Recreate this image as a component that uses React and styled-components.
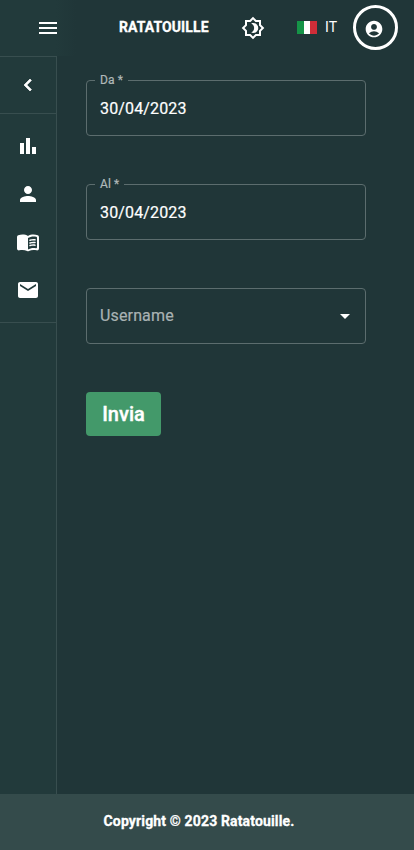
import React from "react";
import styled, { createGlobalStyle } from "styled-components";
import { MdMenu, MdPerson, MdEmail, MdAccountCircle, MdArrowDropDown } from "react-icons/md";

const Global = createGlobalStyle`
  * { box-sizing: border-box; }
  body { margin: 0; background: #203638; }
  button { font: inherit; color: inherit; letter-spacing: inherit; border: 0; padding: 0; background: none; }
`;

const Page = styled.div`
  height: 850px;
  display: grid;
  grid-template-rows: 56px 1fr 56px;
  font-family: Roboto, sans-serif;
  color: #fff;
  background: #203638;
`;

const Header = styled.header`
  display: flex;
  align-items: center;
  background: linear-gradient(90deg, #223a3b 0 56px, #203638 76px);
`;

const IconButton = styled.button`
  display: flex;
  margin-left: ${(p) => p.$left}px;
  font-size: 24px;
`;

const Brand = styled.h1`
  margin: 0 0 2px 59px;
  width: 90px;
  font-size: 14px;
  font-weight: 700;
  line-height: 20px;
  letter-spacing: 0.1px;
  -webkit-text-stroke: 0.3px currentColor;
  white-space: nowrap;
`;

const Language = styled.button`
  display: flex;
  align-items: center;
  margin: 0 0 2px 32px;
  width: 56px;
  gap: 8px;
  font-size: 14px;
  line-height: 20px;
  letter-spacing: 0.15px;
`;

const Flag = styled.span`
  width: 20px;
  height: 13px;
  background: linear-gradient(90deg, #159447 0 33.3%, #fff 33.3% 66.6%, #cf2d38 66.6%);
`;

const Account = styled.button`
  display: flex;
  align-items: center;
  justify-content: center;
  width: 45px;
  height: 45px;
  && { margin-bottom: 1px; padding: 2px 3px 0 0; border: 3px solid #fff; }
  border-radius: 50%;
  font-size: 20px;
`;

const Body = styled.div`
  display: grid;
  grid-template-columns: 57px 1fr;
`;

const Sidebar = styled.nav`
  background: #223a3b;
  border-right: 1px solid #384e4f;
`;

const NavGroup = styled.div`
  display: flex;
  flex-direction: column;
  border-top: ${(p) => (p.$first ? "1px solid #384e4f" : "0")};
  border-bottom: 1px solid #384e4f;
  padding: ${(p) => (p.$first ? "4px 0" : "8px 0")};
`;

const NavItem = styled.button`
  display: flex;
  align-items: center;
  justify-content: center;
  height: 48px;
  font-size: 24px;
`;

const Form = styled.form`
  display: flex;
  flex-direction: column;
  align-items: flex-start;
  padding: 19px 0 0 29px;
`;

const Field = styled.fieldset`
  width: 280px;
  height: 61px;
  margin: 0 0 43px;
  padding: 0 13px;
  border: 1px solid #5c6d6e;
  border-radius: 4px;
`;

const Legend = styled.legend`
  margin-left: -5px;
  padding: 0 5px;
  height: 11px;
  font-size: 12px;
  line-height: 10px;
  letter-spacing: 0.12px;
  color: #b0b9b9;
  -webkit-text-stroke: 0.2px currentColor;
`;

const Value = styled.div`
  padding-top: 11px;
  font-size: 16px;
  line-height: 23px;
  letter-spacing: 0.15px;
  -webkit-text-stroke: 0.2px currentColor;
`;

const Select = styled.button`
  && {
    display: flex;
    align-items: center;
    justify-content: space-between;
    width: 280px;
    height: 56px;
    margin: 5px 0 48px;
    padding: 0 8px 0 13px;
    border: 1px solid #5c6d6e;
  }
  border-radius: 4px;
  font-size: 24px;
`;

const Placeholder = styled.span`
  margin-bottom: 2px;
  font-size: 16px;
  line-height: 23px;
  letter-spacing: 0.15px;
  color: #a9b2b3;
  -webkit-text-stroke: 0.2px currentColor;
`;

const Submit = styled.button`
  && { background: #43996a; font-size: 20px; font-weight: 500; }
  width: 75px;
  height: 44px;
  border-radius: 4px;
  -webkit-text-stroke: 0.4px currentColor;
`;

const Footer = styled.footer`
  display: flex;
  justify-content: center;
  padding: 17px 16px 0 0;
  background: #344b4b;
  font-size: 14px;
  font-weight: 700;
  line-height: 20px;
  letter-spacing: 0.15px;
  -webkit-text-stroke: 0.3px currentColor;
`;

const Icon = ({ children }) => (
  <svg width="24" height="24" viewBox="0 0 24 24" fill="currentColor">{children}</svg>
);

const Collapse = () => (
  <Icon>
    <path d="M15.41 7.41 14 6l-6 6 6 6 1.41-1.41L10.83 12z" stroke="currentColor" strokeWidth="0.7" />
  </Icon>
);

const BarChart = () => (
  <Icon><path d="M4 9h4v11H4zm12 4h4v7h-4zm-6-9h4v16h-4z" /></Icon>
);

const Brightness = () => (
  <Icon>
    <path d="M20 8.69V4h-4.69L12 .69 8.69 4H4v4.69L.69 12 4 15.31V20h4.69L12 23.31 15.31 20H20v-4.69L23.31 12 20 8.69zm-2 5.79V18h-3.52L12 20.48 9.52 18H6v-3.52L3.52 12 6 9.52V6h3.52L12 3.52 14.48 6H18v3.52L20.48 12 18 14.48z" />
    <path d="M12.29 7c-.74 0-1.45.17-2.08.46 1.72.79 2.92 2.53 2.92 4.54s-1.2 3.75-2.92 4.54c.63.29 1.34.46 2.08.46 2.76 0 5-2.24 5-5s-2.24-5-5-5z" />
  </Icon>
);

const BookLine = "c-.32 0-.61-.2-.71-.52-.13-.39.09-.82.48-.94 1.54-.5 3.53-.66 5.36-.45.41.05.71.42.66.83s-.42.71-.83.66c-1.62-.19-3.39-.04-4.73.39-.08.01-.16.03-.23.03z";

const MenuBook = () => (
  <Icon>
    <path d="M17.5 4.5c-1.95 0-4.05.4-5.5 1.5-1.45-1.1-3.55-1.5-5.5-1.5-1.45 0-2.99.22-4.28.79C1.49 5.62 1 6.33 1 7.14v11.28c0 1.3 1.22 2.26 2.48 1.94.98-.25 2.02-.36 3.02-.36 1.56 0 3.22.26 4.56.92.6.3 1.28.3 1.87 0 1.34-.67 3-.92 4.56-.92 1 0 2.04.11 3.02.36 1.26.33 2.48-.63 2.48-1.94V7.14c0-.81-.49-1.52-1.22-1.85-1.28-.57-2.82-.79-4.27-.79zM21 17.23c0 .63-.58 1.09-1.2.98-.75-.14-1.53-.2-2.3-.2-1.7 0-4.15.65-5.5 1.5V8c1.35-.85 3.8-1.5 5.5-1.5.92 0 1.83.09 2.7.28.46.1.8.51.8.98v9.47z" />
    <path d={`M13.98 11.01${BookLine}M13.98 13.67${BookLine}M13.98 16.33${BookLine}`} />
  </Icon>
);

export default function App() {
  return (
    <>
      <Global />
      <Page>
        <Header>
          <IconButton $left={36} aria-label="Menu"><MdMenu /></IconButton>
          <Brand>RATATOUILLE</Brand>
          <IconButton $left={32} aria-label="Tema"><Brightness /></IconButton>
          <Language><Flag />IT</Language>
          <Account aria-label="Account"><MdAccountCircle /></Account>
        </Header>
        <Body>
          <Sidebar>
            <NavGroup $first>
              <NavItem aria-label="Chiudi"><Collapse /></NavItem>
            </NavGroup>
            <NavGroup>
              <NavItem aria-label="Statistiche"><BarChart /></NavItem>
              <NavItem aria-label="Utenti"><MdPerson /></NavItem>
              <NavItem aria-label="Menu"><MenuBook /></NavItem>
              <NavItem aria-label="Messaggi"><MdEmail /></NavItem>
            </NavGroup>
          </Sidebar>
          <Form>
            <Field><Legend>Da *</Legend><Value>30/04/2023</Value></Field>
            <Field><Legend>Al *</Legend><Value>30/04/2023</Value></Field>
            <Select type="button"><Placeholder>Username</Placeholder><MdArrowDropDown /></Select>
            <Submit type="button">Invia</Submit>
          </Form>
        </Body>
        <Footer>Copyright © 2023 Ratatouille.</Footer>
      </Page>
    </>
  );
}
